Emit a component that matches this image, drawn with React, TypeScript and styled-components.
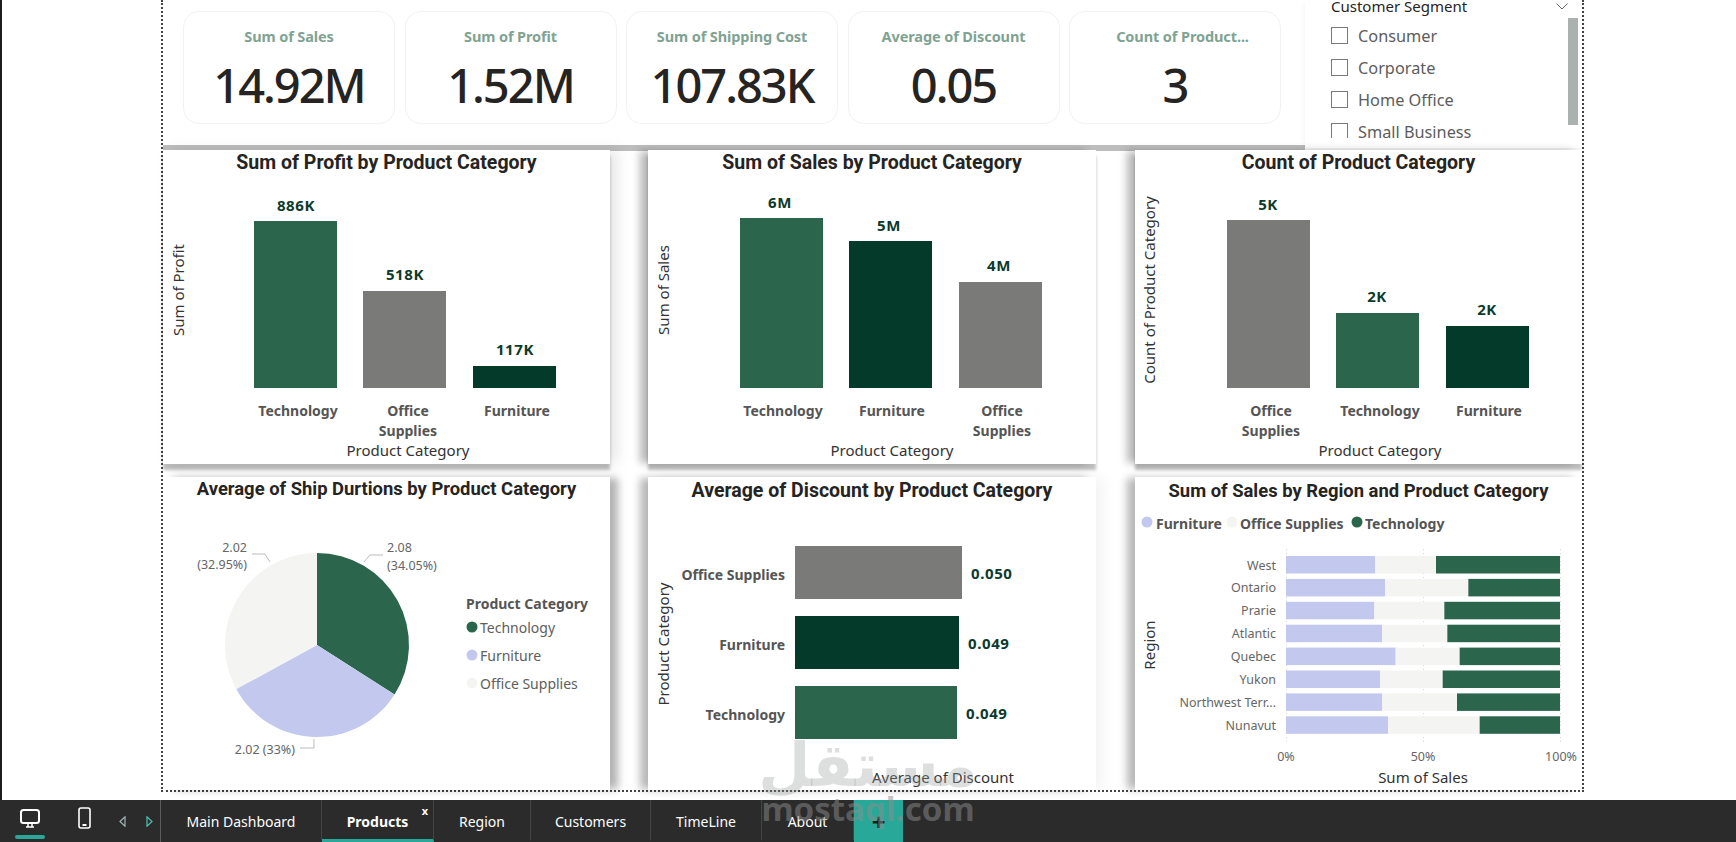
import React from "react";
import styled, { createGlobalStyle } from "styled-components";

const GREEN = "#2a654c";
const DARK = "#043a2a";
const GRAY = "#7a7a78";
const LAV = "#c3c9ee";
const OFF = "#f4f4f2";
const TEAL = "#27a898";

const Global = createGlobalStyle`
  html, body { margin: 0; padding: 0; background: #fff; overflow: hidden; }
  body { font-family: "Noto Sans", "Open Sans", sans-serif; }
`;

const Page = styled.div`
  position: relative;
  width: 1736px;
  height: 842px;
  display: flex;
  flex-direction: column;
  overflow: hidden;
`;

const Canvas = styled.main`
  height: 800px;
  box-sizing: border-box;
  border-left: 2px solid #1d1d1d;
  padding: 0 0 8px 159px;
`;

const Report = styled.div`
  box-sizing: border-box;
  width: 1423px;
  height: 792px;
  border: 2px dotted #444;
  border-top: 0;
  display: flex;
  flex-direction: column;
`;

const TopRow = styled.section`
  display: flex;
  height: 145px;
  margin-bottom: 5px;
`;

const KpiPanel = styled.div`
  width: 1142px;
  height: 145px;
  box-sizing: border-box;
  padding: 11px 0 0 20px;
  display: flex;
  align-items: flex-start;
  gap: 9.5px;
  background: #fff;
  box-shadow: 0 6px 0 rgba(0, 0, 0, 0.26);
`;

const KpiCard = styled.div`
  width: 212px;
  height: 113px;
  box-sizing: border-box;
  border: 1px solid #f2f2f2;
  border-radius: 16px;
  padding-top: 14px;
  text-align: center;
`;

const KpiLabel = styled.div<{ $indent?: number }>`
  font-family: "Noto Sans", sans-serif;
  font-size: 14.5px;
  font-weight: 700;
  line-height: 20px;
  letter-spacing: -0.1px;
  padding-left: ${(p) => p.$indent || 0}px;
  color: #7fa392;
`;

const KpiValue = styled.div`
  font-family: "Noto Sans", sans-serif;
  font-size: 47px;
  font-weight: 500;
  line-height: 50px;
  margin-top: 14px;
  letter-spacing: -2px;
  color: #252423;
`;

const Slicer = styled.aside`
  position: relative;
  width: 277px;
  height: 148px;
  box-sizing: border-box;
  padding-left: 26px;
  background: #fff;
  box-shadow: 0 3px 6px rgba(0, 0, 0, 0.06);
`;

const SlicerHead = styled.div`
  display: flex;
  justify-content: space-between;
  align-items: center;
  height: 13px;
  padding-right: 14px;
  font-size: 15px;
  line-height: 13px;
  color: #252423;
`;

const SlicerList = styled.div`
  margin-top: 14px;
  height: 111px;
  overflow: hidden;
  display: flex;
  flex-direction: column;
  gap: 15px;
`;

const SlicerRow = styled.label`
  display: flex;
  align-items: center;
  gap: 10px;
  height: 17px;
  flex: none;
  font-size: 16.3px;
  color: #5c5c5c;
`;

const CheckBox = styled.span`
  width: 17px;
  height: 17px;
  box-sizing: border-box;
  border: 1px solid #7a7a7a;
  flex: none;
`;

const ScrollThumb = styled.div`
  position: absolute;
  top: 18px;
  right: 4px;
  width: 10px;
  height: 107px;
  background: #abb1ae;
`;

const ChartGrid = styled.section`
  display: grid;
  grid-template-columns: 485px 487px 447px;
  grid-template-rows: 314px 313px;
  row-gap: 13px;
`;

const shadows: Record<string, string> = {
  first: "0 6px 3px rgba(0,0,0,0.26), 7px 0 14px rgba(0,0,0,0.1)",
  top: "-9px 0 8px -1px rgba(0,0,0,0.28), 0 6px 3px rgba(0,0,0,0.26)",
  left: "-9px 0 8px -1px rgba(0,0,0,0.28)",
  right: "9px 0 8px -1px rgba(0,0,0,0.3)",
  faint: "-9px 0 8px -1px rgba(0,0,0,0.28), 7px 0 14px rgba(0,0,0,0.05)",
};

const Card = styled.article<{ $w: number; $shadow: string }>`
  position: relative;
  width: ${(p) => p.$w}px;
  justify-self: start;
  background: #fff;
  box-shadow: ${(p) => shadows[p.$shadow]};
`;

const Title = styled.h2<{ $size: number; $lh: number }>`
  margin: 0;
  height: 26px;
  line-height: ${(p) => p.$lh}px;
  text-align: center;
  white-space: nowrap;
  font-family: "Roboto", sans-serif;
  font-weight: 700;
  font-size: ${(p) => p.$size}px;
  color: #252423;
`;

const Plot = styled.svg`
  display: block;
`;

const ValueText = styled.text<{ $anchor?: string }>`
  font-family: "Noto Sans", sans-serif;
  font-size: 15px;
  font-weight: 700;
  letter-spacing: 0.6px;
  fill: #0c3a2c;
  text-anchor: ${(p) => p.$anchor || "middle"};
  dominant-baseline: central;
`;

const CategoryText = styled.text<{ $anchor?: string }>`
  font-family: "Noto Sans", sans-serif;
  font-size: 14px;
  font-weight: 700;
  fill: #555;
  text-anchor: ${(p) => p.$anchor || "middle"};
  dominant-baseline: central;
`;

const AxisTitle = styled.text`
  font-family: "Noto Sans", sans-serif;
  font-size: 15px;
  fill: #333;
  text-anchor: middle;
  dominant-baseline: central;
`;

const TickText = styled.text<{ $anchor?: string }>`
  font-family: "Noto Sans", sans-serif;
  font-size: 12.5px;
  fill: #666;
  text-anchor: ${(p) => p.$anchor || "middle"};
  dominant-baseline: central;
`;

const LegendText = styled.text`
  font-family: "Noto Sans", sans-serif;
  font-size: 14px;
  fill: #605e5c;
  dominant-baseline: central;
`;

const Footer = styled.footer`
  height: 42px;
  display: flex;
  background: #2b2b2b;
  color: #fff;
`;

const NavIcons = styled.div`
  box-sizing: border-box;
  width: 161px;
  padding-left: 15px;
  display: flex;
  align-items: flex-start;
  border-right: 1px solid #5c5c5c;
`;

const NavItem = styled.div<{ $ml: number; $mt: number; $w: number }>`
  margin-left: ${(p) => p.$ml}px;
  padding-top: ${(p) => p.$mt}px;
  width: ${(p) => p.$w}px;
  display: flex;
  flex-direction: column;
  align-items: center;
`;

const NavMark = styled.div`
  width: 30px;
  height: 4px;
  margin-top: 7px;
  border-radius: 2px;
  background: ${TEAL};
`;

const Tab = styled.div<{ $w: number; $active?: boolean }>`
  position: relative;
  box-sizing: border-box;
  width: ${(p) => p.$w}px;
  display: flex;
  align-items: center;
  justify-content: center;
  padding-top: 4px;
  border-right: 1px solid #444;
  border-bottom: 3px solid ${(p) => (p.$active ? TEAL : "transparent")};
  font-size: 14px;
  font-weight: ${(p) => (p.$active ? 700 : 400)};
`;

const TabClose = styled.span`
  position: absolute;
  top: 3px;
  right: 5px;
  font-size: 11px;
  font-weight: 700;
`;

const AddTab = styled.div`
  width: 49px;
  background: ${TEAL};
  color: #1a1a1a;
  display: flex;
  align-items: center;
  justify-content: center;
  font-size: 24px;
  font-weight: 700;
`;

const Watermark = styled.div`
  position: absolute;
  left: 758px;
  top: 738px;
  width: 220px;
  text-align: center;
  pointer-events: none;
`;

const WatermarkArabic = styled.div`
  font-family: "DejaVu Sans", sans-serif;
  font-weight: 700;
  font-size: 60px;
  line-height: 54px;
  color: rgba(150, 155, 155, 0.32);
`;

const WatermarkLatin = styled.div`
  font-family: "Noto Sans", sans-serif;
  font-weight: 700;
  font-size: 33px;
  line-height: 34px;
  color: rgba(140, 140, 140, 0.5);
`;

const kpis = [
  ["Sum of Sales", "14.92M", 0],
  ["Sum of Profit", "1.52M", 0],
  ["Sum of Shipping Cost", "107.83K", 0],
  ["Average of Discount", "0.05", 0],
  ["Count of Product...", "3", 15],
] as const;

const segments = ["Consumer", "Corporate", "Home Office", "Small Business"];

type Column = { x: number; top: number; fill: string; value: string; vx: number; vy: number; lx: number; lines: string[] };

const columnCharts: { ox: number; w: number; title: string; shadow: string; yTitle: string; yx: number; tx: number; cols: Column[] }[] = [
  {
    ox: 163, w: 447, title: "Sum of Profit by Product Category", shadow: "first", yTitle: "Sum of Profit", yx: 178, tx: 408,
    cols: [
      { x: 254, top: 221, fill: GREEN, value: "886K", vx: 296, vy: 205, lx: 298, lines: ["Technology"] },
      { x: 363, top: 291, fill: GRAY, value: "518K", vx: 405, vy: 274, lx: 408, lines: ["Office", "Supplies"] },
      { x: 473, top: 366, fill: DARK, value: "117K", vx: 515, vy: 349, lx: 517, lines: ["Furniture"] },
    ],
  },
  {
    ox: 648, w: 448, title: "Sum of Sales by Product Category", shadow: "top", yTitle: "Sum of Sales", yx: 663, tx: 892,
    cols: [
      { x: 740, top: 218, fill: GREEN, value: "6M", vx: 780, vy: 202, lx: 783, lines: ["Technology"] },
      { x: 849, top: 241, fill: DARK, value: "5M", vx: 889, vy: 225, lx: 892, lines: ["Furniture"] },
      { x: 959, top: 282, fill: GRAY, value: "4M", vx: 999, vy: 265, lx: 1002, lines: ["Office", "Supplies"] },
    ],
  },
  {
    ox: 1135, w: 447, title: "Count of Product Category", shadow: "top", yTitle: "Count of Product Category", yx: 1149, tx: 1380,
    cols: [
      { x: 1227, top: 220, fill: GRAY, value: "5K", vx: 1268, vy: 204, lx: 1271, lines: ["Office", "Supplies"] },
      { x: 1336, top: 313, fill: GREEN, value: "2K", vx: 1377, vy: 296, lx: 1380, lines: ["Technology"] },
      { x: 1446, top: 326, fill: DARK, value: "2K", vx: 1487, vy: 309, lx: 1489, lines: ["Furniture"] },
    ],
  },
];

const slice = (cx: number, cy: number, r: number, from: number, to: number) => {
  const pt = (a: number) => {
    const t = ((a - 90) * Math.PI) / 180;
    return `${(cx + r * Math.cos(t)).toFixed(2)} ${(cy + r * Math.sin(t)).toFixed(2)}`;
  };
  return `M${cx} ${cy}L${pt(from)}A${r} ${r} 0 ${to - from > 180 ? 1 : 0} 1 ${pt(to)}Z`;
};

const hBars = [
  { name: "Office Supplies", y: 546, end: 962, fill: GRAY, value: "0.050", vx: 971 },
  { name: "Furniture", y: 616, end: 959, fill: DARK, value: "0.049", vx: 968 },
  { name: "Technology", y: 686, end: 957, fill: GREEN, value: "0.049", vx: 966 },
];

const regions: [string, number, number][] = [
  ["West", 765, 948],
  ["Ontario", 795, 1045],
  ["Prarie", 763, 973],
  ["Atlantic", 786, 982],
  ["Quebec", 827, 1019],
  ["Yukon", 780, 968],
  ["Northwest Terr...", 787, 1011],
  ["Nunavut", 804, 1079],
];

const toX = (z: number) => z / 3 + 1120;

const Chart: React.FC<{ ox: number; oy: number; w: number; h: number; title: string; size?: number; lh?: number; shadow: string; children: React.ReactNode }> = ({ ox, oy, w, h, title, size = 19.5, lh = 25, shadow, children }) => (
  <Card $w={w} $shadow={shadow}>
    <Title $size={size} $lh={lh}>{title}</Title>
    <Plot width={w} height={h - 26} viewBox={`${ox} ${oy + 26} ${w} ${h - 26}`}>
      {children}
    </Plot>
  </Card>
);

const Monitor = () => (
  <svg width="20" height="19" viewBox="0 0 20 19" fill="none" stroke="#fff" strokeWidth="2">
    <rect x="1" y="1" width="18" height="13" rx="2.5" />
    <path d="M6 18h8M8 15v3M12 15v3" strokeWidth="1.5" />
  </svg>
);

const Phone = () => (
  <svg width="13" height="22" viewBox="0 0 13 22" fill="none" stroke="#fff" strokeWidth="1.6">
    <rect x="1" y="1" width="11" height="20" rx="2" />
    <path d="M4.5 18h4" strokeWidth="2" />
  </svg>
);

const Caret = ({ dir }: { dir: "left" | "right" }) => (
  <svg width="7" height="11" viewBox="0 0 7 11" fill="none" stroke={dir === "left" ? "#9fb5b5" : "#4fc0b5"} strokeWidth="1.2">
    <path d={dir === "left" ? "M6 .8v9.4L1 5.5z" : "M1 .8v9.4l5-4.7z"} />
  </svg>
);

export default function App() {
  const A = 122.58;
  const B = A + 118.8;
  return (
    <Page>
      <Global />
      <Canvas>
        <Report>
          <TopRow>
            <KpiPanel>
              {kpis.map(([label, value, indent]) => (
                <KpiCard key={label}>
                  <KpiLabel $indent={indent}>{label}</KpiLabel>
                  <KpiValue>{value}</KpiValue>
                </KpiCard>
              ))}
            </KpiPanel>
            <Slicer>
              <SlicerHead>
                Customer Segment
                <svg width="12" height="7" viewBox="0 0 12 7" fill="none" stroke="#666" strokeWidth="1">
                  <path d="M.5.5 6 6l5.5-5.5" />
                </svg>
              </SlicerHead>
              <SlicerList>
                {segments.map((s) => (
                  <SlicerRow key={s}>
                    <CheckBox />
                    {s}
                  </SlicerRow>
                ))}
              </SlicerList>
              <ScrollThumb />
            </Slicer>
          </TopRow>
          <ChartGrid>
            {columnCharts.map((c) => (
              <Chart key={c.title} ox={c.ox} oy={150} w={c.w} h={314} title={c.title} shadow={c.shadow}>
                <AxisTitle transform={`rotate(-90 ${c.yx} 290)`} x={c.yx} y={290}>{c.yTitle}</AxisTitle>
                {c.cols.map((b) => (
                  <g key={b.value + b.x}>
                    <rect x={b.x} y={b.top} width={83} height={388 - b.top} fill={b.fill} />
                    <ValueText x={b.vx} y={b.vy}>{b.value}</ValueText>
                    {b.lines.map((l, i) => (
                      <CategoryText key={l} x={b.lx} y={410 + i * 20}>{l}</CategoryText>
                    ))}
                  </g>
                ))}
                <AxisTitle x={c.tx} y={450}>Product Category</AxisTitle>
              </Chart>
            ))}

            <Chart ox={163} oy={477} w={447} h={313} title="Average of Ship Durtions by Product Category" size={18.4} lh={23} shadow="right">
              <path d={slice(317, 645, 92, 0, A)} fill={GREEN} />
              <path d={slice(317, 645, 92, A, B)} fill={LAV} />
              <path d={slice(317, 645, 92, B, 360)} fill={OFF} />
              <g fill="none" stroke="#bbb" strokeWidth="1">
                <path d="M364 562l6-7h13" />
                <path d="M270 562l-5-8h-13" />
                <path d="M314 739v9h-14" />
              </g>
              <TickText $anchor="start" x={387} y={547}>2.08</TickText>
              <TickText $anchor="start" x={387} y={565}>(34.05%)</TickText>
              <TickText $anchor="end" x={247} y={547}>2.02</TickText>
              <TickText $anchor="end" x={247} y={564}>(32.95%)</TickText>
              <TickText $anchor="end" x={295} y={749}>2.02 (33%)</TickText>
              <CategoryText $anchor="start" x={466} y={603}>Product Category</CategoryText>
              <circle cx={472} cy={627} r={5.5} fill={GREEN} />
              <LegendText x={480} y={627}>Technology</LegendText>
              <circle cx={472} cy={655} r={5.5} fill={LAV} />
              <LegendText x={480} y={655}>Furniture</LegendText>
              <circle cx={472} cy={683} r={5.5} fill={OFF} />
              <LegendText x={480} y={683}>Office Supplies</LegendText>
            </Chart>

            <Chart ox={648} oy={477} w={448} h={313} title="Average of Discount by Product Category" lh={27} shadow="faint">
              <AxisTitle transform="rotate(-90 663 644)" x={663} y={644}>Product Category</AxisTitle>
              {hBars.map((b) => (
                <g key={b.name}>
                  <rect x={795} y={b.y} width={b.end - 795} height={53} fill={b.fill} />
                  <CategoryText $anchor="end" x={785} y={b.y + 28}>{b.name}</CategoryText>
                  <ValueText $anchor="start" x={b.vx} y={b.y + 27}>{b.value}</ValueText>
                </g>
              ))}
              <AxisTitle x={943} y={777}>Average of Discount</AxisTitle>
            </Chart>

            <Chart ox={1135} oy={477} w={447} h={313} title="Sum of Sales by Region and Product Category" size={18.4} lh={27} shadow="left">
              <circle cx={1147} cy={522} r={5.5} fill={LAV} />
              <CategoryText $anchor="start" x={1156} y={523}>Furniture</CategoryText>
              <circle cx={1232} cy={522} r={5.5} fill={OFF} />
              <CategoryText $anchor="start" x={1240} y={523}>Office Supplies</CategoryText>
              <circle cx={1357} cy={522} r={5.5} fill={GREEN} />
              <CategoryText $anchor="start" x={1365} y={523}>Technology</CategoryText>
              <g stroke="#d5d5d5" strokeWidth="1" strokeDasharray="1 3">
                <path d="M1286.5 549v195M1423.5 549v195M1560.5 549v195" />
              </g>
              <AxisTitle transform="rotate(-90 1149 645)" x={1149} y={645}>Region</AxisTitle>
              {regions.map(([name, a, b], i) => {
                const y = 556 + i * 22.9;
                return (
                  <g key={name}>
                    <rect x={1286} y={y} width={toX(a) - 1286} height={17.5} fill={LAV} />
                    <rect x={toX(a)} y={y} width={toX(b) - toX(a)} height={17.5} fill={OFF} />
                    <rect x={toX(b)} y={y} width={1560 - toX(b)} height={17.5} fill={GREEN} />
                    <TickText $anchor="end" x={1276} y={y + 9}>{name}</TickText>
                  </g>
                );
              })}
              <TickText x={1286} y={756}>0%</TickText>
              <TickText x={1423} y={756}>50%</TickText>
              <TickText x={1561} y={756}>100%</TickText>
              <AxisTitle x={1423} y={777}>Sum of Sales</AxisTitle>
            </Chart>
          </ChartGrid>
        </Report>
      </Canvas>
      <Footer>
        <NavIcons>
          <NavItem $ml={0} $mt={9} $w={30}>
            <Monitor />
            <NavMark />
          </NavItem>
          <NavItem $ml={33} $mt={7} $w={13}>
            <Phone />
          </NavItem>
          <NavItem $ml={28} $mt={16} $w={7}>
            <Caret dir="left" />
          </NavItem>
          <NavItem $ml={20} $mt={16} $w={7}>
            <Caret dir="right" />
          </NavItem>
        </NavIcons>
        <Tab $w={161}>Main Dashboard</Tab>
        <Tab $w={112} $active>
          Products
          <TabClose>x</TabClose>
        </Tab>
        <Tab $w={97}>Region</Tab>
        <Tab $w={120}>Customers</Tab>
        <Tab $w={111}>TimeLine</Tab>
        <Tab $w={92}>About</Tab>
        <AddTab>+</AddTab>
      </Footer>
      <Watermark>
        <WatermarkArabic>مستقل</WatermarkArabic>
        <WatermarkLatin>mostaql.com</WatermarkLatin>
      </Watermark>
    </Page>
  );
}
